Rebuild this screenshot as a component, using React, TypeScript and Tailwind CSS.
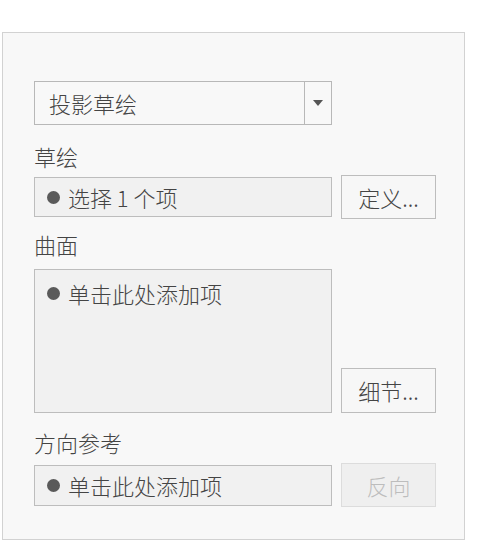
export default function App() {
  const font = { fontFamily: '"Noto Sans CJK SC", "Noto Sans", sans-serif' };
  const field =
    "w-[298px] border border-[#bdbdbd] bg-[#f1f1f1] flex items-center pl-[12px] text-[#444]";
  const btn =
    "w-[95px] h-[44px] border border-[#bdbdbd] bg-[#f7f7f7] flex items-center justify-center text-[#444]";

  function Bullet() {
    return <span className="w-[13px] h-[13px] rounded-full bg-[#5a5a5a] mr-[8px] shrink-0" />;
  }

  return (
    <div className="w-[482px] h-[543px] bg-white pt-[32px] pl-[2px] font-light" style={font}>
      <div className="w-[463px] h-[508px] border border-[#d2d2d2] bg-[#f8f8f8] pl-[31px] pt-[48px] text-[22px]">
        {/* type dropdown */}
        <div className="w-[298px] h-[44px] border border-[#b8b8b8] bg-[#f8f8f8] flex">
          <div className="flex-1 flex items-center pl-[14px] text-[#444]">投影草绘</div>
          <div className="w-[27px] border-l border-[#b8b8b8] flex items-center justify-center">
            <svg width="10" height="6" viewBox="0 0 10 6">
              <path d="M0 0h10L5 6z" fill="#555" />
            </svg>
          </div>
        </div>

        <div className="mt-[16px] h-[30px] leading-[30px] text-[#444]">草绘</div>
        <div className="mt-[4px] flex items-center gap-[9px]">
          <div className={`${field} h-[40px]`}>
            <Bullet />
            <span>选择 1 个项</span>
          </div>
          <button className={btn}>定义...</button>
        </div>

        <div className="mt-[10px] h-[30px] leading-[30px] text-[#444]">曲面</div>
        <div className="mt-[10px] flex items-end gap-[9px]">
          <div className={`${field} h-[144px] items-start pt-[8px]`}>
            <span className="flex items-center h-[30px]">
              <Bullet />
              <span>单击此处添加项</span>
            </span>
          </div>
          <button className={`${btn} h-[45px]`}>细节...</button>
        </div>

        <div className="mt-[14px] h-[30px] leading-[30px] text-[#444]">方向参考</div>
        <div className="mt-[6px] flex items-center gap-[9px]">
          <div className={`${field} h-[41px]`}>
            <Bullet />
            <span>单击此处添加项</span>
          </div>
          <button className="w-[95px] h-[44px] border border-[#dcdcdc] bg-[#efefef] flex items-center justify-center text-[#bdbdbd]">
            反向
          </button>
        </div>
      </div>
    </div>
  );
}
